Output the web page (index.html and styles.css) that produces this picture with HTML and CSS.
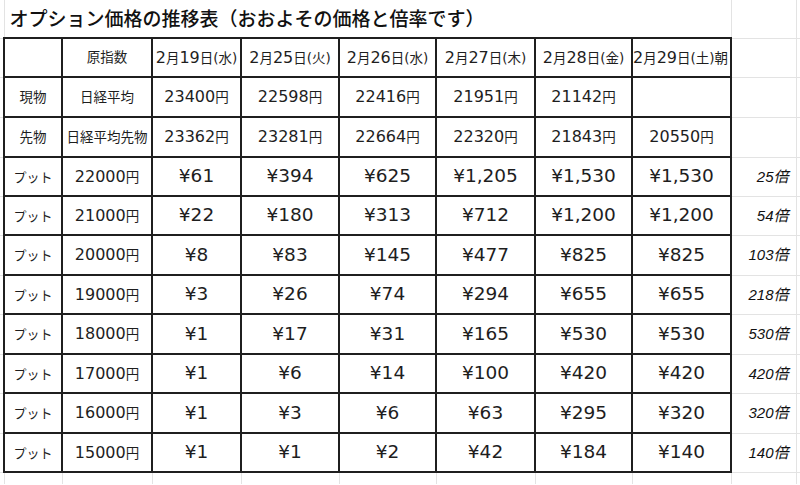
FILE: index.html
```html
<!DOCTYPE html>
<html lang="ja">
<head>
<meta charset="utf-8">
<title>オプション価格の推移表</title>
<link rel="stylesheet" href="styles.css">
</head>
<body>
<table class="sheet">
  <colgroup>
    <col class="w-a"><col class="w-b"><col class="w-c"><col class="w-d"><col class="w-e">
    <col class="w-f"><col class="w-g"><col class="w-h"><col class="w-i"><col class="w-j"><col class="w-k">
  </colgroup>
  <tr class="r-title">
    <td></td>
    <td class="title" colspan="8">オプション価格の推移表（おおよその価格と倍率です）</td>
    <td></td><td></td>
  </tr>
  <tr class="r-39">
    <td></td>
    <td class="c"></td>
    <td class="c">原指数</td>
    <td class="c"><span class="n">2</span>月<span class="n">19</span>日(水)</td>
    <td class="c"><span class="n">2</span>月<span class="n">25</span>日(火)</td>
    <td class="c"><span class="n">2</span>月<span class="n">26</span>日(水)</td>
    <td class="c"><span class="n">2</span>月<span class="n">27</span>日(木)</td>
    <td class="c"><span class="n">2</span>月<span class="n">28</span>日(金)</td>
    <td class="c ovf"><span class="n">2</span>月<span class="n">29</span>日(土)朝</td>
    <td></td><td></td>
  </tr>
  <tr class="r-40">
    <td></td>
    <td class="c">現物</td>
    <td class="c">日経平均</td>
    <td class="c"><span class="n">23400</span>円</td>
    <td class="c"><span class="n">22598</span>円</td>
    <td class="c"><span class="n">22416</span>円</td>
    <td class="c"><span class="n">21951</span>円</td>
    <td class="c"><span class="n">21142</span>円</td>
    <td class="c"></td>
    <td></td><td></td>
  </tr>
  <tr class="r-40">
    <td></td>
    <td class="c">先物</td>
    <td class="c">日経平均先物</td>
    <td class="c"><span class="n">23362</span>円</td>
    <td class="c"><span class="n">23281</span>円</td>
    <td class="c"><span class="n">22664</span>円</td>
    <td class="c"><span class="n">22320</span>円</td>
    <td class="c"><span class="n">21843</span>円</td>
    <td class="c"><span class="n">20550</span>円</td>
    <td></td><td></td>
  </tr>
  <tr class="r-39">
    <td></td>
    <td class="c put">プット</td>
    <td class="c"><span class="n">22000</span>円</td>
    <td class="c yen">¥61</td><td class="c yen">¥394</td><td class="c yen">¥625</td>
    <td class="c yen">¥1,205</td><td class="c yen">¥1,530</td><td class="c yen">¥1,530</td>
    <td class="bai">25倍</td><td></td>
  </tr>
  <tr class="r-39">
    <td></td>
    <td class="c put">プット</td>
    <td class="c"><span class="n">21000</span>円</td>
    <td class="c yen">¥22</td><td class="c yen">¥180</td><td class="c yen">¥313</td>
    <td class="c yen">¥712</td><td class="c yen">¥1,200</td><td class="c yen">¥1,200</td>
    <td class="bai">54倍</td><td></td>
  </tr>
  <tr class="r-40">
    <td></td>
    <td class="c put">プット</td>
    <td class="c"><span class="n">20000</span>円</td>
    <td class="c yen">¥8</td><td class="c yen">¥83</td><td class="c yen">¥145</td>
    <td class="c yen">¥477</td><td class="c yen">¥825</td><td class="c yen">¥825</td>
    <td class="bai">103倍</td><td></td>
  </tr>
  <tr class="r-39">
    <td></td>
    <td class="c put">プット</td>
    <td class="c"><span class="n">19000</span>円</td>
    <td class="c yen">¥3</td><td class="c yen">¥26</td><td class="c yen">¥74</td>
    <td class="c yen">¥294</td><td class="c yen">¥655</td><td class="c yen">¥655</td>
    <td class="bai">218倍</td><td></td>
  </tr>
  <tr class="r-40">
    <td></td>
    <td class="c put">プット</td>
    <td class="c"><span class="n">18000</span>円</td>
    <td class="c yen">¥1</td><td class="c yen">¥17</td><td class="c yen">¥31</td>
    <td class="c yen">¥165</td><td class="c yen">¥530</td><td class="c yen">¥530</td>
    <td class="bai">530倍</td><td></td>
  </tr>
  <tr class="r-39">
    <td></td>
    <td class="c put">プット</td>
    <td class="c"><span class="n">17000</span>円</td>
    <td class="c yen">¥1</td><td class="c yen">¥6</td><td class="c yen">¥14</td>
    <td class="c yen">¥100</td><td class="c yen">¥420</td><td class="c yen">¥420</td>
    <td class="bai">420倍</td><td></td>
  </tr>
  <tr class="r-40">
    <td></td>
    <td class="c put">プット</td>
    <td class="c"><span class="n">16000</span>円</td>
    <td class="c yen">¥1</td><td class="c yen">¥3</td><td class="c yen">¥6</td>
    <td class="c yen">¥63</td><td class="c yen">¥295</td><td class="c yen">¥320</td>
    <td class="bai">320倍</td><td></td>
  </tr>
  <tr class="r-39">
    <td></td>
    <td class="c put">プット</td>
    <td class="c"><span class="n">15000</span>円</td>
    <td class="c yen">¥1</td><td class="c yen">¥1</td><td class="c yen">¥2</td>
    <td class="c yen">¥42</td><td class="c yen">¥184</td><td class="c yen">¥140</td>
    <td class="bai">140倍</td><td></td>
  </tr>
  <tr class="r-end">
    <td></td><td></td><td></td><td></td><td></td><td></td>
    <td></td><td></td><td></td><td></td><td></td>
  </tr>
</table>
</body>
</html>
```
FILE: styles.css
```css
html, body {
  margin: 0;
  padding: 0;
  background: #ffffff;
  overflow: hidden;
}

body {
  font-family: "DejaVu Sans", "Noto Sans CJK JP", sans-serif;
  color: #1e1e1e;
}

.sheet {
  border-collapse: collapse;
  table-layout: fixed;
  width: 836px;
  border-style: hidden;
}

.w-a { width: 4px; }
.w-b { width: 58px; }
.w-c { width: 90px; }
.w-d { width: 89px; }
.w-e { width: 98px; }
.w-f { width: 97px; }
.w-g { width: 99px; }
.w-h { width: 97px; }
.w-i { width: 99px; }
.w-j { width: 65px; }
.w-k { width: 40px; }

.r-title { height: 38px; }
.r-39 { height: 39px; }
.r-40 { height: 40px; }
.r-end { height: 12px; }

.sheet td {
  border: 1px solid #e3e3e3;
  padding: 0;
  text-align: center;
  vertical-align: middle;
  white-space: nowrap;
  overflow: visible;
  font-size: 13.5px;
  line-height: 1.2;
}

.sheet td.c {
  border: 2px solid #1f1f1f;
}

.sheet td.title {
  text-align: left;
  padding-left: 5px;
  font-family: "Noto Sans CJK JP", sans-serif;
  font-size: 19px;
  font-weight: 500;
  color: #111111;
}

.n {
  font-family: "DejaVu Sans", sans-serif;
  font-size: 16px;
}

.sheet td.put {
  font-family: "Noto Sans CJK JP", sans-serif;
  font-size: 13px;
}

.sheet td.yen {
  font-size: 18.5px;
}

.sheet td.ovf {
  text-align: left;
}

.sheet td.bai {
  text-align: right;
  padding-right: 7px;
  font-family: "Liberation Sans", "Noto Sans CJK JP", sans-serif;
  font-style: italic;
  font-size: 15px;
  color: #111111;
}
```
